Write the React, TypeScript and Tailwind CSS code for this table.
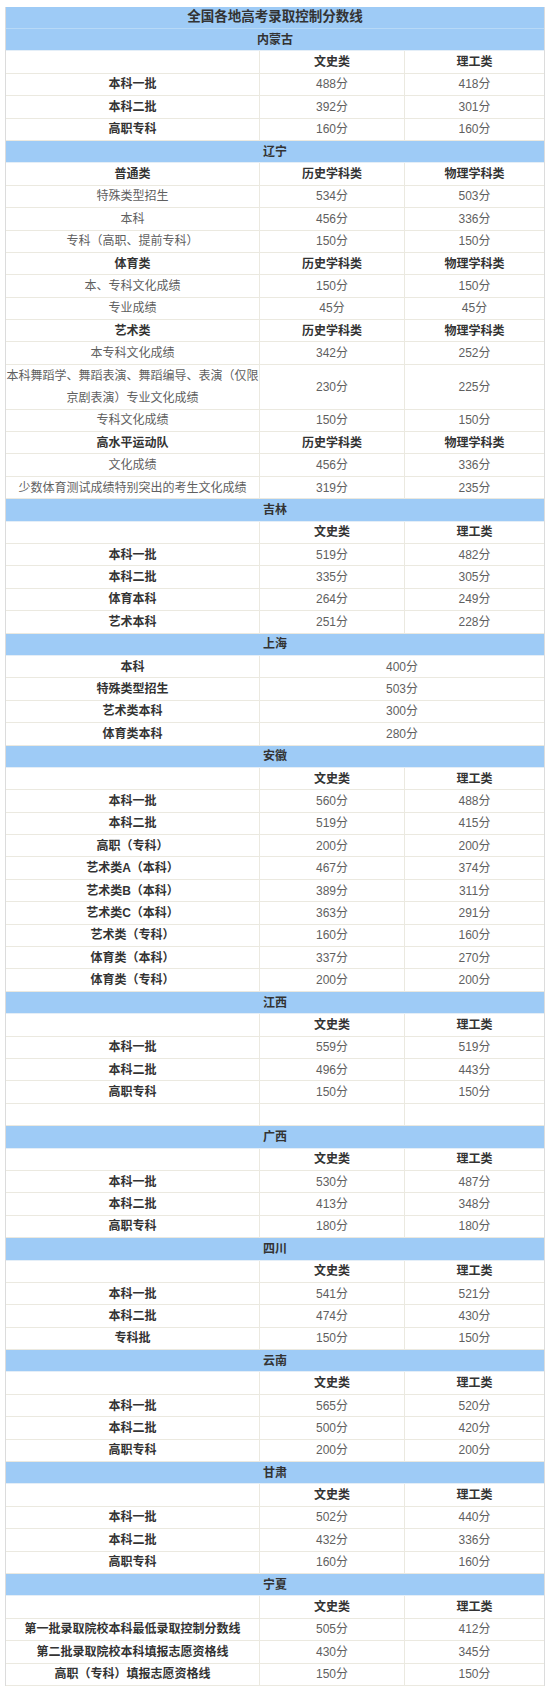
import React from "react";

type Row =
  | { t: "title"; text: string }
  | { t: "region"; text: string }
  | { t: "head"; cells: [string, string, string] }
  | { t: "data"; cells: [string, string, string]; plain?: boolean; tall?: boolean }
  | { t: "span"; label: string; value: string }
  | { t: "blank" };

const H1: [string, string, string] = ["", "文史类", "理工类"];

const rows: Row[] = [
  { t: "title", text: "全国各地高考录取控制分数线" },
  { t: "region", text: "内蒙古" },
  { t: "head", cells: H1 },
  { t: "data", cells: ["本科一批", "488分", "418分"] },
  { t: "data", cells: ["本科二批", "392分", "301分"] },
  { t: "data", cells: ["高职专科", "160分", "160分"] },
  { t: "region", text: "辽宁" },
  { t: "head", cells: ["普通类", "历史学科类", "物理学科类"] },
  { t: "data", cells: ["特殊类型招生", "534分", "503分"], plain: true },
  { t: "data", cells: ["本科", "456分", "336分"], plain: true },
  { t: "data", cells: ["专科（高职、提前专科）", "150分", "150分"], plain: true },
  { t: "head", cells: ["体育类", "历史学科类", "物理学科类"] },
  { t: "data", cells: ["本、专科文化成绩", "150分", "150分"], plain: true },
  { t: "data", cells: ["专业成绩", "45分", "45分"], plain: true },
  { t: "head", cells: ["艺术类", "历史学科类", "物理学科类"] },
  { t: "data", cells: ["本专科文化成绩", "342分", "252分"], plain: true },
  {
    t: "data",
    cells: ["本科舞蹈学、舞蹈表演、舞蹈编导、表演（仅限京剧表演）专业文化成绩", "230分", "225分"],
    plain: true,
    tall: true,
  },
  { t: "data", cells: ["专科文化成绩", "150分", "150分"], plain: true },
  { t: "head", cells: ["高水平运动队", "历史学科类", "物理学科类"] },
  { t: "data", cells: ["文化成绩", "456分", "336分"], plain: true },
  { t: "data", cells: ["少数体育测试成绩特别突出的考生文化成绩", "319分", "235分"], plain: true },
  { t: "region", text: "吉林" },
  { t: "head", cells: H1 },
  { t: "data", cells: ["本科一批", "519分", "482分"] },
  { t: "data", cells: ["本科二批", "335分", "305分"] },
  { t: "data", cells: ["体育本科", "264分", "249分"] },
  { t: "data", cells: ["艺术本科", "251分", "228分"] },
  { t: "region", text: "上海" },
  { t: "span", label: "本科", value: "400分" },
  { t: "span", label: "特殊类型招生", value: "503分" },
  { t: "span", label: "艺术类本科", value: "300分" },
  { t: "span", label: "体育类本科", value: "280分" },
  { t: "region", text: "安徽" },
  { t: "head", cells: H1 },
  { t: "data", cells: ["本科一批", "560分", "488分"] },
  { t: "data", cells: ["本科二批", "519分", "415分"] },
  { t: "data", cells: ["高职（专科）", "200分", "200分"] },
  { t: "data", cells: ["艺术类A（本科）", "467分", "374分"] },
  { t: "data", cells: ["艺术类B（本科）", "389分", "311分"] },
  { t: "data", cells: ["艺术类C（本科）", "363分", "291分"] },
  { t: "data", cells: ["艺术类（专科）", "160分", "160分"] },
  { t: "data", cells: ["体育类（本科）", "337分", "270分"] },
  { t: "data", cells: ["体育类（专科）", "200分", "200分"] },
  { t: "region", text: "江西" },
  { t: "head", cells: H1 },
  { t: "data", cells: ["本科一批", "559分", "519分"] },
  { t: "data", cells: ["本科二批", "496分", "443分"] },
  { t: "data", cells: ["高职专科", "150分", "150分"] },
  { t: "blank" },
  { t: "region", text: "广西" },
  { t: "head", cells: H1 },
  { t: "data", cells: ["本科一批", "530分", "487分"] },
  { t: "data", cells: ["本科二批", "413分", "348分"] },
  { t: "data", cells: ["高职专科", "180分", "180分"] },
  { t: "region", text: "四川" },
  { t: "head", cells: H1 },
  { t: "data", cells: ["本科一批", "541分", "521分"] },
  { t: "data", cells: ["本科二批", "474分", "430分"] },
  { t: "data", cells: ["专科批", "150分", "150分"] },
  { t: "region", text: "云南" },
  { t: "head", cells: H1 },
  { t: "data", cells: ["本科一批", "565分", "520分"] },
  { t: "data", cells: ["本科二批", "500分", "420分"] },
  { t: "data", cells: ["高职专科", "200分", "200分"] },
  { t: "region", text: "甘肃" },
  { t: "head", cells: H1 },
  { t: "data", cells: ["本科一批", "502分", "440分"] },
  { t: "data", cells: ["本科二批", "432分", "336分"] },
  { t: "data", cells: ["高职专科", "160分", "160分"] },
  { t: "region", text: "宁夏" },
  { t: "head", cells: H1 },
  { t: "data", cells: ["第一批录取院校本科最低录取控制分数线", "505分", "412分"] },
  { t: "data", cells: ["第二批录取院校本科填报志愿资格线", "430分", "345分"] },
  { t: "data", cells: ["高职（专科）填报志愿资格线", "150分", "150分"] },
];

const GRID = "grid grid-cols-[254px_145px_1fr] border-b border-[#ebe9e0]";
const CELL = "flex items-center justify-center text-center";
const BOLD = "font-bold text-[#333333]";
const PLAIN = "font-normal text-[#5f5f5f]";

function RowView({ r }: { r: Row }) {
  if (r.t === "title") {
    return (
      <div className="h-[22px] flex items-center justify-center bg-[#9ecbf6] border-b border-[#b7d9f7] text-[13.5px] font-bold text-[#333333]">
        {r.text}
      </div>
    );
  }
  if (r.t === "region") {
    return (
      <div className="h-[22.4px] flex items-center justify-center bg-[#9ecbf6] border-b border-[#e4eef7] text-[12px] font-bold text-[#333333]">
        {r.text}
      </div>
    );
  }
  if (r.t === "blank") {
    return (
      <div className={`${GRID} h-[22.4px]`}>
        <div className={`${CELL} border-r border-[#ebe9e0]`} />
        <div className={`${CELL} border-r border-[#ebe9e0]`} />
        <div className={CELL} />
      </div>
    );
  }
  if (r.t === "span") {
    return (
      <div className="grid grid-cols-[254px_1fr] h-[22.4px] border-b border-[#ebe9e0] text-[12px]">
        <div className={`${CELL} px-[4px] ${BOLD} border-r border-[#ebe9e0]`}>{r.label}</div>
        <div className={`${CELL} px-[4px] ${PLAIN}`}>{r.value}</div>
      </div>
    );
  }
  const isHead = r.t === "head";
  const tall = r.t === "data" && r.tall;
  const labelCls = isHead ? BOLD : r.t === "data" && r.plain ? PLAIN : BOLD;
  const valCls = isHead ? BOLD : PLAIN;
  return (
    <div className={`${GRID} ${tall ? "h-[44.8px]" : "h-[22.4px]"} text-[12px]`}>
      <div
        className={`${CELL} ${labelCls} border-r border-[#ebe9e0] ${
          tall ? "leading-[22px] px-0" : "px-[4px]"
        }`}
      >
        {r.cells[0]}
      </div>
      <div className={`${CELL} px-[4px] ${valCls} border-r border-[#ebe9e0]`}>{r.cells[1]}</div>
      <div className={`${CELL} px-[4px] ${valCls}`}>{r.cells[2]}</div>
    </div>
  );
}

export default function App() {
  return (
    <div
      className="w-[550px] h-[1690px] bg-white pt-[7px] pl-[5px]"
      style={{ fontFamily: '"Liberation Sans", "Noto Sans CJK SC", sans-serif' }}
    >
      <div className="w-[540px] border-x border-[#dcdcdc]">
        {rows.map((r, i) => (
          <RowView key={i} r={r} />
        ))}
      </div>
    </div>
  );
}
